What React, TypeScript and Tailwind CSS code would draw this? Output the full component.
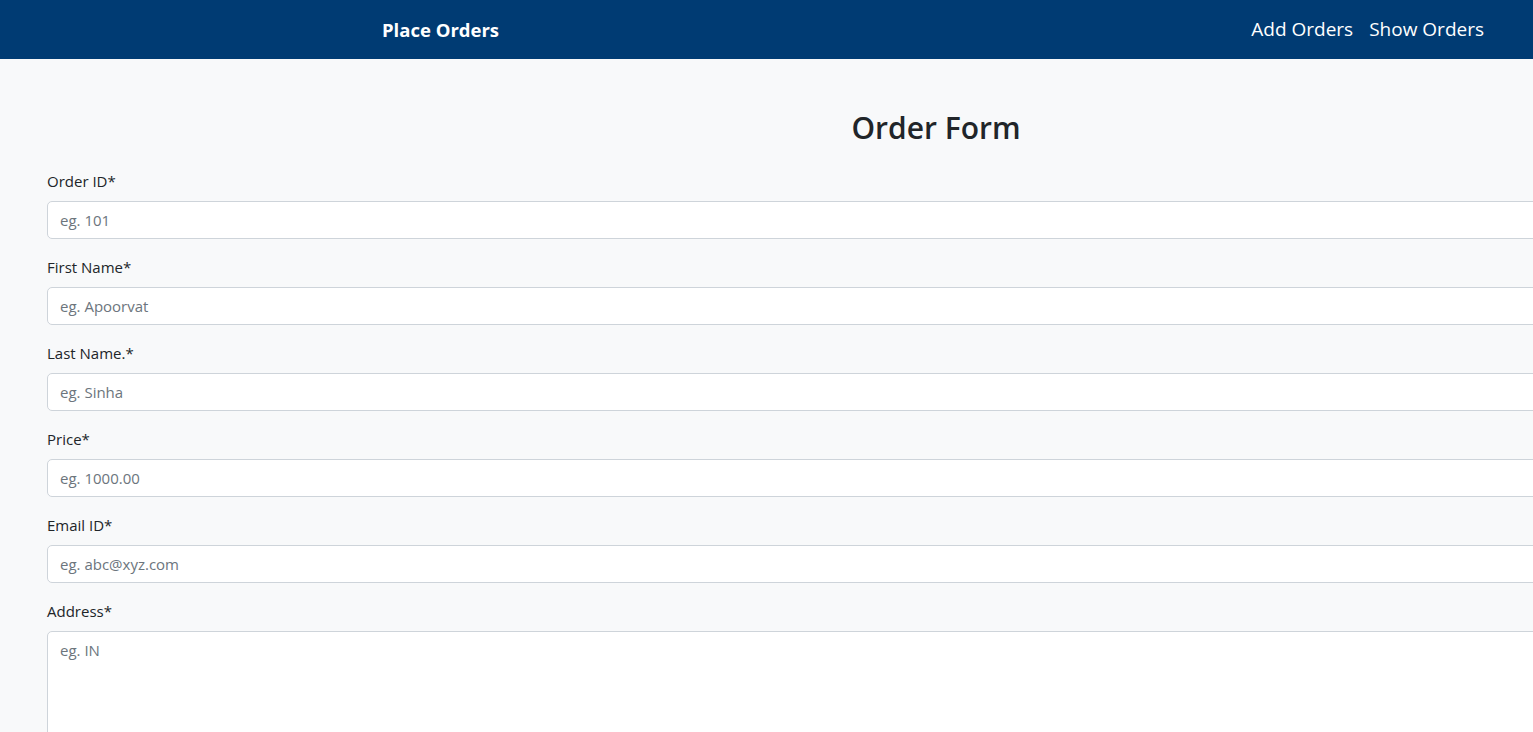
const fields = [
  { label: 'Order ID*', placeholder: 'eg. 101' },
  { label: 'First Name*', placeholder: 'eg. Apoorvat' },
  { label: 'Last Name.*', placeholder: 'eg. Sinha' },
  { label: 'Price*', placeholder: 'eg. 1000.00' },
  { label: 'Email ID*', placeholder: 'eg. abc@xyz.com' },
];

export default function App() {
  return (
    <div className="h-screen overflow-hidden bg-[#f8f9fa] font-['Open_Sans',sans-serif] text-[#212529]">
      {/* Navbar */}
      <nav className="flex h-[59px] items-center bg-[#003b73] pl-[382px] pr-[41px] text-white">
        <span className="text-[18.5px] font-bold">Place Orders</span>
        <div className="ml-auto flex text-[19px]">
          <a className="px-2">Add Orders</a>
          <a className="px-2">Show Orders</a>
        </div>
      </nav>

      {/* Form */}
      <form className="ml-[47px] w-[1778px]">
        <h2 className="mt-[51px] mb-[23px] text-center text-[30px] leading-[36px] font-semibold">Order Form</h2>
        {fields.map((f) => (
          <div key={f.label} className="mb-4">
            <label className="mb-2 block text-[15px] leading-6">{f.label}</label>
            <input
              className="block h-[38px] w-full rounded-[5px] border border-[#ced4da] bg-white px-3 text-[15px] placeholder:text-[#6c757d]"
              placeholder={f.placeholder}
            />
          </div>
        ))}
        <div className="mb-4">
          <label className="mb-2 block text-[15px] leading-6">Address*</label>
          <textarea
            className="block h-[150px] w-full resize-none rounded-[5px] border border-[#ced4da] bg-white px-3 py-[6px] text-[15px] leading-6 placeholder:text-[#6c757d]"
            placeholder="eg. IN"
          />
        </div>
      </form>
    </div>
  );
}
